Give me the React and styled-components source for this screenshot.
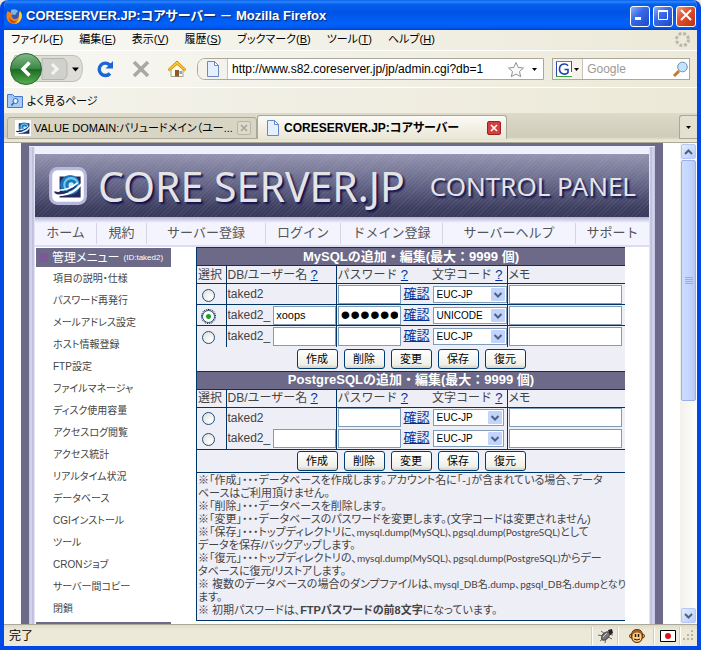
import React, { useState } from "react";
import styled, { createGlobalStyle } from "styled-components";

const GlobalStyle = createGlobalStyle`
  * {
    box-sizing: border-box;
  }
  body {
    margin: 0;
    background: #ece9d8;
    font-family: "Liberation Sans", "Noto Sans CJK JP", sans-serif;
    font-size: 12px;
    color: #000;
  }
  input, select, button {
    font-family: inherit;
    margin: 0;
    padding: 0;
  }
`;

const Window = styled.div`
  height: 100vh;
  display: flex;
  flex-direction: column;
  border: 4px solid #0048e8;
  border-top: 0;
  border-radius: 8px 8px 0 0;
  background: #ece9d8;
  overflow: hidden;
`;

const TitleBar = styled.header`
  height: 30px;
  flex: none;
  display: flex;
  align-items: center;
  gap: 3px;
  padding: 2px 1px 0 2px;
  background: linear-gradient(
    #0a5fe8 0,
    #2b86ff 6%,
    #0560ec 14%,
    #0053e4 40%,
    #0062fb 80%,
    #0058f0 92%,
    #0040c8 100%
  );
`;
const Title = styled.h1`
  flex: 1;
  margin: 0;
  font-size: 13px;
  line-height: 20px;
  font-weight: bold;
  font-feature-settings: "palt";
  white-space: nowrap;
  color: #fff;
  text-shadow: 1px 1px 1px #0a246a;
`;
const CaptionButton = styled.button`
  width: 20px;
  height: 21px;
  border: 1px solid #fff;
  border-radius: 3px;
  background: ${(props) =>
    props.$close
      ? "linear-gradient(135deg, #f0a088, #e05030 40%, #c03010)"
      : "linear-gradient(135deg, #8cb0f8, #3a6ae8 40%, #1c48c8)"};
`;

const MenuBar = styled.nav`
  height: 21px;
  flex: none;
  display: flex;
  align-items: center;
  gap: 16px;
  padding: 0 6px 2px 7px;
  background: linear-gradient(90deg, #f8f8f4, #ece9d8);
  border-bottom: 1px solid #fff;
`;
const MenuItem = styled.button`
  border: 0;
  background: none;
  font-size: 11px;
  line-height: 18px;
  font-feature-settings: "palt";
  white-space: nowrap;
`;
const Spacer = styled.div`
  flex: 1;
`;

const Toolbar = styled.div`
  height: 37px;
  flex: none;
  display: flex;
  align-items: center;
  padding: 0 7px 0 3px;
  background: linear-gradient(90deg, #f8f8f4, #ece9d8);
  border-bottom: 1px solid #fff;
`;
const ToolButton = styled.button`
  width: ${(props) => props.$width || 36}px;
  height: 34px;
  border: 0;
  background: none;
  display: flex;
  align-items: center;
  justify-content: center;
`;
const Field = styled.div`
  height: 22px;
  display: flex;
  align-items: center;
  flex: ${(props) => props.$grow};
  min-width: 0;
  margin-left: ${(props) => props.$gap}px;
  background: #fff;
  border: 1px solid #aca899;
  border-radius: ${(props) => (props.$round ? "8px 0 0 8px" : 0)};
  overflow: hidden;
`;
const FieldIcon = styled.span`
  height: 20px;
  display: flex;
  align-items: center;
  justify-content: center;
  gap: 2px;
  flex: none;
  width: 30px;
  background: #f4f2ea;
  border-right: 1px solid #c8c5b5;
`;
const FieldInput = styled.input`
  flex: 1;
  min-width: 0;
  width: 0;
  border: 0;
  outline: 0;
  padding-left: 4px;
  font-size: 12px;
  line-height: 18px;
  background: none;
  &::placeholder {
    color: #9a9a9a;
    opacity: 1;
  }
`;
const FieldButton = styled.button`
  border: 0;
  background: none;
  width: 18px;
  height: 20px;
  display: flex;
  align-items: center;
  justify-content: center;
`;

const BookmarkBar = styled.div`
  height: 25px;
  flex: none;
  display: flex;
  align-items: center;
  padding: 0 3px;
  background: linear-gradient(90deg, #f4f3ec, #ece9d8);
`;
const Bookmark = styled.a`
  display: flex;
  align-items: center;
  gap: 4px;
  color: #000;
  font-size: 11px;
  text-decoration: none;
  line-height: 18px;
  font-feature-settings: "palt";
`;

const TabStrip = styled.div`
  height: 30px;
  flex: none;
  display: flex;
  align-items: flex-end;
  padding: 0 0 3px 3px;
  background: linear-gradient(#dddac9, #cfccba 24px, #eae7d6 27px);
  border-bottom: 1px solid #aca899;
`;
const Tab = styled.div`
  flex: 0 1 250px;
  min-width: 0;
  height: ${(props) => (props.$active ? 24 : 22)}px;
  display: flex;
  align-items: center;
  gap: 3px;
  padding: 0 5px 0 7px;
  font-size: ${(props) => (props.$active ? 12 : 11)}px;
  font-weight: ${(props) => (props.$active ? "bold" : "normal")};
  background: ${(props) =>
    props.$active ? "linear-gradient(#fbfaf6, #eae7d6)" : "#d8d5c4"};
  border: 1px solid #aca899;
  border-bottom-width: ${(props) => (props.$active ? 0 : 1)}px;
  border-radius: 3px 3px 0 0;
`;
const TabLabel = styled.span`
  flex: 1;
  line-height: 18px;
  font-feature-settings: "palt";
  white-space: nowrap;
  overflow: hidden;
`;
const TabClose = styled.button`
  width: 14px;
  height: 14px;
  display: flex;
  align-items: center;
  justify-content: center;
  flex: none;
  border: 1px solid ${(props) => (props.$active ? "#a02020" : "#b8b5a5")};
  border-radius: 2px;
  background: ${(props) => (props.$active ? "#d04040" : "#dedbcd")};
`;
const TabList = styled.button`
  width: 18px;
  height: 24px;
  border: 1px solid #aca899;
  border-right: 0;
  border-radius: 3px 0 0 0;
  background: #e4e1d1;
  display: flex;
  align-items: center;
  justify-content: center;
`;

const Viewport = styled.div`
  flex: 1;
  min-height: 0;
  display: flex;
  overflow: hidden;
  background: #fff;
`;
const Site = styled.div`
  flex: 1;
  min-width: 0;
  margin: 0 17px;
  align-self: flex-start;
  padding: 3px 8px 0;
  background: #6c6a88;
`;
const SiteFrame = styled.div`
  min-height: 100vh;
  padding: 6px 6px 0;
  border-top: 1px solid #eeeefc;
  background: linear-gradient(
    90deg,
    #c0c0e0 0,
    #d8d8f0 2px,
    #b8b8d8 4px,
    #f0f0fc 6px,
    #f0f0fc calc(100% - 6px),
    #b8b8d8 calc(100% - 4px),
    #d8d8f0 calc(100% - 2px),
    #c0c0e0 100%
  );
`;
const Banner = styled.div`
  height: 64px;
  display: flex;
  align-items: center;
  gap: 10px;
  padding: 0 13px;
  overflow: hidden;
  border-top: 1px solid #f4f4ff;
  background: repeating-linear-gradient(
      135deg,
      rgba(255, 255, 255, 0.06) 0 1px,
      transparent 1px 3px
    ),
    linear-gradient(#9494b0, #68688a 45%, #3e3e60 85%, #383858);
  color: #e4e4e6;
  font-family: "Noto Sans", sans-serif;
  text-shadow: 2px 2px 2px #10104c;
  white-space: nowrap;
`;
const Brand = styled.span`
  flex: 1;
  font-size: 41px;
  line-height: 62px;
`;
const BrandSub = styled.span`
  font-size: 26px;
  line-height: 62px;
`;
const SiteNav = styled.nav`
  display: grid;
  grid-template-columns: 62fr 50fr 119fr 75fr 102fr 133fr 73fr;
  height: 30px;
  padding: 6px 0 1px;
  background: linear-gradient(#b4b4d8, #f4f4fe 6px, #f4f4fe);
  border-bottom: 2px solid #dcdcf0;
`;
const NavLink = styled.a`
  font-size: 13px;
  line-height: 20px;
  text-align: center;
  white-space: nowrap;
  color: #555;
  text-decoration: none;
  border-right: 1px solid #d4d4e4;
  &:last-child {
    border-right: 0;
  }
`;
const Body = styled.div`
  display: flex;
  background: #fff;
  padding-right: 24px;
`;
const Sidebar = styled.aside`
  flex: none;
  width: 161px;
  padding-left: 1px;
`;
const SideHead = styled.h2`
  margin: 1px 0 0;
  width: 135px;
  height: 19px;
  display: flex;
  align-items: center;
  gap: 4px;
  padding: 0 3px;
  background: #6c6a88;
  color: #fff;
  font-size: 12px;
  line-height: 18px;
  font-weight: normal;
  font-feature-settings: "palt";
  white-space: nowrap;
  &::before {
    content: "";
    flex: none;
    width: 9px;
    height: 9px;
    background: #7c5898;
  }
`;
const SideNote = styled.small`
  font-size: 8px;
`;
const SideList = styled.ul`
  list-style: none;
  margin: 0 0 2px;
  padding: 1px 0 0 17px;
`;
const SideLink = styled.a`
  display: block;
  font-size: 10px;
  line-height: 22px;
  font-feature-settings: "palt";
  white-space: nowrap;
  color: #444;
  text-decoration: none;
`;

const Main = styled.main`
  flex: 1;
  min-width: 0;
  color: #444;
  background: #eeeef6;
  border-left: 1px solid #003366;
  align-self: flex-start;
`;
const DbTable = styled.table`
  width: 100%;
  table-layout: fixed;
  border-collapse: collapse;
  border-top: 1px solid #003366;
`;
const Caption = styled.th`
  height: 18px;
  padding: 0;
  background: #6c6a88;
  border-bottom: 1px solid #003366;
  color: #fff;
  font-size: 13px;
  line-height: 16px;
`;
const HeadCell = styled.th`
  height: 18px;
  padding: 0 0 0 1px;
  text-align: left;
  font-size: 12px;
  font-weight: normal;
  line-height: 16px;
  white-space: nowrap;
  border-bottom: 1px solid #003366;
  border-right: ${(props) => (props.$line ? "1px solid #003366" : 0)};
  font-feature-settings: ${(props) => (props.$tight ? '"palt"' : "normal")};
`;
const HeadPair = styled.div`
  display: flex;
  justify-content: space-between;
  padding-right: 4px;
`;
const Cell = styled.td`
  height: 21px;
  padding: 0 1px;
  line-height: 16px;
  border-bottom: ${(props) => (props.$rule ? "1px solid #003366" : 0)};
  border-right: ${(props) => (props.$line ? "1px solid #003366" : 0)};
`;
const Inline = styled.div`
  display: flex;
  align-items: center;
  gap: 3px;
  font-size: 12px;
`;
const Link = styled.a`
  color: #003399;
  font-size: 13px;
  line-height: 16px;
  white-space: nowrap;
`;
const Radio = styled.input`
  appearance: none;
  display: block;
  width: 13px;
  height: 13px;
  margin: 2px 4px 0;
  border: 1px solid #1c5180;
  border-radius: 50%;
  background: radial-gradient(circle at 70% 70%, #fff, #dcdcd7);
  &:checked {
    background: radial-gradient(circle, #21a121 0 2px, #fff 3px);
    outline: 1px dotted #000;
  }
`;
const TextInput = styled.input`
  display: block;
  width: ${(props) => (props.$wide ? "113px" : "63px")};
  height: 19px;
  flex: none;
  padding: 0 2px;
  border: 1px solid #7f9db9;
  background: #fff;
  font-size: ${(props) => (props.type === "password" ? 28 : 11)}px;
  line-height: 16px;
`;
const SelectBox = styled.div`
  position: relative;
  width: ${(props) => props.$width}px;
  flex: none;
  svg {
    position: absolute;
    right: 2px;
    top: 2px;
    pointer-events: none;
  }
`;
const Select = styled.select`
  appearance: none;
  display: block;
  width: 100%;
  height: 17px;
  padding-left: 3px;
  border: 1px solid #7f9db9;
  border-radius: 0;
  background: #fff;
  font-size: 10px;
  color: #000;
`;
const Actions = styled.td`
  height: ${(props) => props.$height}px;
  padding: 0;
`;
const ActionRow = styled.div`
  display: flex;
  justify-content: center;
  gap: 6px;
`;
const ActionButton = styled.button`
  width: 41px;
  height: 20px;
  border: 1px solid #003c74;
  border-radius: 3px;
  background: linear-gradient(#fff, #f0f0ea 80%, #d6d0c5);
  font-size: 11px;
  line-height: 16px;
  color: #000;
`;
const Notes = styled.div`
  padding: 1px 0 3px 1px;
  border-top: 1px solid #003366;
  border-bottom: 1px solid #003366;
`;
const Note = styled.p`
  margin: 0;
  font-size: 11px;
  line-height: 13px;
  font-feature-settings: "palt";
  white-space: nowrap;
`;
const File = styled.span`
  font-family: Lato, "Noto Sans CJK JP", sans-serif;
  font-size: 10px;
  line-height: 12px;
`;

const ScrollBar = styled.div`
  width: 17px;
  flex: none;
  display: flex;
  flex-direction: column;
  padding: 1px;
  background: linear-gradient(90deg, #f3f1ec, #fefefb);
`;
const ScrollButton = styled.button`
  height: 15px;
  flex: none;
  border: 1px solid #b4c8f8;
  border-radius: 2px;
  background: linear-gradient(135deg, #e4ecfe, #b8ccfa);
  display: flex;
  align-items: center;
  justify-content: center;
`;
const Track = styled.div`
  flex: 1;
  padding: 1px 0;
`;
const Thumb = styled.div`
  height: 54%;
  display: flex;
  align-items: center;
  justify-content: center;
  border: 1px solid #98b0e8;
  border-radius: 2px;
  background: linear-gradient(90deg, #cddcfe, #c4d5fd 60%, #b6c9f7);
`;

const StatusBar = styled.footer`
  height: 22px;
  flex: none;
  display: flex;
  align-items: center;
  padding-left: 5px;
  border-top: 1px solid #aca899;
  background: linear-gradient(#dedbca, #ece9d8 5px);
  font-size: 12px;
`;
const StatusText = styled.span`
  flex: 1;
  line-height: 18px;
`;
const StatusCell = styled.span`
  width: ${(props) => props.$width}px;
  height: 18px;
  display: flex;
  align-items: center;
  justify-content: center;
  border-left: 1px solid #fff;
  box-shadow: -1px 0 0 #d0cdbb;
`;

const CaretIcon = () => (
  <svg width="5" height="3" viewBox="0 0 5 3">
    <path d="M0 0h5L2.5 3z" fill="#000" />
  </svg>
);

const PageIcon = () => (
  <svg width="16" height="16" viewBox="0 0 16 16">
    <path d="M2.500 .5h7l4 4v11h-11z" fill="#e4f0ff" stroke="#6888c0" />
    <path d="M9.500 .5v4h4z" fill="#fff" stroke="#6888c0" />
  </svg>
);

const GlobeShape = () => (
  <>
    <path d="M11 10h20v20H11z" fill="#28285c" />
    <circle cx="21" cy="18" r="9.500" fill="#1c78b8" />
    <circle cx="22" cy="18" r="6.500" fill="none" stroke="#70c8f0" strokeWidth="2" />
    <circle cx="22" cy="18" r="2.500" fill="#c0ecff" />
    <path d="M8 27q13 3 25-11" fill="none" stroke="#fff" strokeWidth="2" />
    <path d="M6 24c-1 5 14 5 26-10-9 9-19 12-26 10z" fill="#28285c" />
    <path d="M10 23q10 0 18-7" fill="none" stroke="#fff" strokeWidth="1.500" />
  </>
);

const GlobeLogo = () => (
  <svg width="40" height="40" viewBox="0 0 38 38">
    <rect x="1" y="1" width="36" height="36" rx="8" fill="#b8b8dc" />
    <rect x="4" y="4" width="30" height="30" rx="5" fill="#fff" />
    <GlobeShape />
  </svg>
);

const GlobeFavicon = () => (
  <svg width="16" height="16" viewBox="4 4 30 30">
    <path d="M4 4h30v30H4z" fill="#fff" />
    <GlobeShape />
  </svg>
);

const FirefoxIcon = () => (
  <svg width="17" height="17" viewBox="0 0 17 17">
    <circle cx="8.500" cy="8" r="7" fill="#3058b8" />
    <path d="M5 2q4-2 7 1l-3 4-4-1z" fill="#78b8f0" />
    <path
      d="M1.500 3L4 4.500Q6 4 7 6L5.500 7.500Q6 11 9 11q4 0 4-5l1-3q3 3 1.500 8Q13 16 8 16 1 15 .5 9 .5 5 1.500 3z"
      fill="#f08018"
    />
    <path d="M14 3q3 4 1 8-2 4-6 5 5-4 4-10z" fill="#fcd040" />
    <path d="M3 9q2 5 8 4-3 3-6 1-2-2-2-5z" fill="#c84008" />
  </svg>
);

const BackForward = () => (
  <svg width="80" height="34" viewBox="0 0 80 34">
    <defs>
      <linearGradient id="green" x1="0" y1="0" x2="0" y2="1">
        <stop offset="0" stopColor="#84b888" />
        <stop offset=".48" stopColor="#3f8848" />
        <stop offset=".52" stopColor="#1b6c24" />
        <stop offset="1" stopColor="#58b050" />
      </linearGradient>
    </defs>
    <path
      d="M8 3.500h58q9 0 9.500 13Q75 29.500 66 29.500H8q-8-12 0-26z"
      fill="#deddd6"
      stroke="#c0bfb6"
    />
    <path d="M35 6.500h22l3 4v13l-3 4H35z" fill="#d0d0cc" stroke="#b4b4b0" />
    <path
      d="M45 12l5 5-5 5"
      fill="none"
      stroke="#f4f4f4"
      strokeWidth="3"
    />
    <circle cx="19" cy="17" r="15.500" fill="url(#green)" stroke="#286830" />
    <path
      d="M22.500 10.500L16 17l6.500 6.500"
      fill="none"
      stroke="#fff"
      strokeWidth="3.500"
    />
    <path d="M65 15.500h7l-3.500 4z" fill="#000" />
  </svg>
);

const ReloadIcon = () => (
  <svg width="18" height="18" viewBox="0 0 18 18">
    <path
      d="M14 5.200A6.200 6.200 0 1 0 14 13.500"
      fill="none"
      stroke="#1c64d8"
      strokeWidth="3.400"
    />
    <path d="M17 1v7.500H9.500z" fill="#1c64d8" />
  </svg>
);

const StopIcon = () => (
  <svg width="18" height="18" viewBox="0 0 18 18">
    <path d="M2 2l14 14M16 2L2 16" stroke="#a8a8a4" strokeWidth="3.600" />
  </svg>
);

const HomeIcon = () => (
  <svg width="20" height="18" viewBox="0 0 20 18">
    <path d="M4 9l6-6 6 6v7.500H4z" fill="#fffbe8" stroke="#a8a090" />
    <path
      d="M1 9.500L10 1l9 8.500-1.500 1.300L10 4.500l-7.500 6.300z"
      fill="#fcc830"
      stroke="#c88c10"
    />
    <path d="M8 10h4v6.500H8z" fill="#8c5830" />
    <path d="M12.500 11h2.500v3h-2.500z" fill="#70a8e8" />
  </svg>
);

const StarIcon = () => (
  <svg width="18" height="17" viewBox="0 0 18 17">
    <path
      d="M9 1.500l2.300 5 5.200.5-4 3.500 1.200 5.200L9 13l-4.700 2.700 1.200-5.200-4-3.500 5.200-.5z"
      fill="#fafafa"
      stroke="#909090"
    />
  </svg>
);

const SearchEngineIcon = () => (
  <svg width="16" height="16" viewBox="0 0 16 16">
    <path d="M0 0h16v16H0z" fill="#fff" />
    <path d="M.5 16V0" stroke="#2848b8" />
    <path d="M0 .5h15" stroke="#38a838" />
    <path d="M15.500 0v11" stroke="#d82020" />
    <path d="M0 15.500h16" stroke="#38a838" />
    <path
      d="M12 4.800C9.500 1.500 3.500 3 3.500 8s6 6.500 8.500 3.500V8.500H8.500"
      fill="none"
      stroke="#2040b0"
      strokeWidth="1.600"
    />
  </svg>
);

const MagnifierIcon = () => (
  <svg width="17" height="17" viewBox="0 0 17 17">
    <path d="M2 15l5-5" stroke="#c87828" strokeWidth="3" />
    <circle cx="10.500" cy="6" r="4.800" fill="#c4e4fc" stroke="#6c90b8" />
  </svg>
);

const ThrobberIcon = () => (
  <svg width="17" height="17" viewBox="0 0 17 17">
    <circle
      cx="8.500"
      cy="8.500"
      r="6"
      fill="none"
      stroke="#b8b6b0"
      strokeWidth="3"
      strokeDasharray="2.900 1.812"
    />
  </svg>
);

const FolderIcon = () => (
  <svg width="16" height="15" viewBox="0 0 16 15">
    <path d="M.5 1.500h5l2 2h8v11H.5z" fill="#9cc4f4" stroke="#4478c8" />
    <path d="M1 5h14v9H1z" fill="#a8ccf8" />
    <circle cx="8.500" cy="8" r="2.500" fill="#e4f4ff" stroke="#3060b0" />
    <path d="M6.500 10l-2 2.500" stroke="#3060b0" strokeWidth="1.500" />
  </svg>
);

const CrossIcon = ({ color }) => (
  <svg width="8" height="8" viewBox="0 0 8 8">
    <path d="M1 1l6 6M7 1L1 7" stroke={color} strokeWidth="1.600" />
  </svg>
);

const ChevronIcon = ({ up }) => (
  <svg width="9" height="6" viewBox="0 0 9 6">
    <path
      d={up ? "M1 5l3.500-3.500L8 5" : "M1 1l3.500 3.500L8 1"}
      fill="none"
      stroke="#4d6185"
      strokeWidth="2"
    />
  </svg>
);

const SelectArrow = () => (
  <svg width="14" height="13" viewBox="0 0 14 13">
    <rect width="14" height="13" rx="1" fill="#c2d3fc" />
    <path d="M3.500 5L7 8.500 10.500 5" fill="none" stroke="#4d6185" strokeWidth="2" />
  </svg>
);

const BugIcon = () => (
  <svg width="18" height="17" viewBox="0 0 18 17">
    <path
      d="M1 8l5 1M3 14l4-3M8 16l1-5M15 12l-4-2M16 8l-5-1M4 4l4 3"
      stroke="#666"
    />
    <ellipse
      cx="8.500"
      cy="9"
      rx="5"
      ry="3"
      transform="rotate(-45 8.500 9)"
      fill="#777"
      stroke="#444"
    />
    <path d="M11 3l4-1 1 4-3 2z" fill="#222" />
    <path d="M6 10l4-4" stroke="#ccc" />
  </svg>
);

const MonkeyIcon = () => (
  <svg width="16" height="16" viewBox="0 0 16 16">
    <circle cx="2.500" cy="8" r="2" fill="#e8a860" stroke="#704010" />
    <circle cx="13.500" cy="8" r="2" fill="#e8a860" stroke="#704010" />
    <path
      d="M8 1.500q6 0 5.500 7Q13 14.500 8 14.500T2.500 8.500Q2 1.500 8 1.500z"
      fill="#a86020"
      stroke="#603008"
    />
    <path d="M4 6q4-3 8 0 2 7-4 8-6-1-4-8z" fill="#fcd088" />
    <path d="M6.500 6v3M9.500 6v3" stroke="#281808" strokeWidth="1.500" />
    <path d="M5 11q3 2 6 0" fill="none" stroke="#281808" />
  </svg>
);

const FlagIcon = () => (
  <svg width="16" height="12" viewBox="0 0 16 12">
    <path d="M.5 .5h15v11H.5z" fill="#fff" stroke="#000" />
    <circle cx="8" cy="6" r="3" fill="#e01018" />
  </svg>
);

const menus = [
  ["ファイル", "F"],
  ["編集", "E"],
  ["表示", "V"],
  ["履歴", "S"],
  ["ブックマーク", "B"],
  ["ツール", "T"],
  ["ヘルプ", "H"],
];

const siteLinks = [
  "ホーム",
  "規約",
  "サーバー登録",
  "ログイン",
  "ドメイン登録",
  "サーバーヘルプ",
  "サポート",
];

const sideLinks = [
  "項目の説明・仕様",
  "パスワード再発行",
  "メールアドレス設定",
  "ホスト情報登録",
  "FTP設定",
  "ファイルマネージャ",
  "ディスク使用容量",
  "アクセスログ閲覧",
  "アクセス統計",
  "リアルタイム状況",
  "データベース",
  "CGIインストール",
  "ツール",
  "CRONジョブ",
  "サーバー間コピー",
  "閉鎖",
];

const mysqlRows = [
  { id: "my0", fixed: true, code: "EUC-JP" },
  { id: "my1", name: "xoops", password: "password", code: "UNICODE" },
  { id: "my2", code: "EUC-JP" },
];
const pgsqlRows = [
  { id: "pg0", fixed: true, code: "EUC-JP" },
  { id: "pg1", code: "EUC-JP" },
];

const DbSection = ({ title, rows, selected, onSelect, ruled }) => (
  <DbTable>
    <colgroup>
      <col style={{ width: 29 }} />
      <col style={{ width: 110 }} />
      <col style={{ width: 171 }} />
      <col />
    </colgroup>
    <thead>
      <tr>
        <Caption colSpan={4}>{title}</Caption>
      </tr>
      <tr>
        <HeadCell $line>選択</HeadCell>
        <HeadCell $line>
          DB/ユーザー名 <Link href="#name">?</Link>
        </HeadCell>
        <HeadCell $line>
          <HeadPair>
            <span>
              パスワード <Link href="#password">?</Link>
            </span>
            <span>
              文字コード <Link href="#code">?</Link>
            </span>
          </HeadPair>
        </HeadCell>
        <HeadCell $tight>メモ</HeadCell>
      </tr>
    </thead>
    <tbody>
      {rows.map((row, i) => {
        const rule = ruled ? i < rows.length - 1 : i === rows.length - 1;
        return (
          <tr key={row.id}>
            <Cell $line $rule={rule}>
              <Radio
                type="radio"
                name="db"
                aria-label={row.id}
                checked={selected === row.id}
                onChange={() => onSelect(row.id)}
              />
            </Cell>
            <Cell $line $rule={rule}>
              <Inline>
                {row.fixed ? "taked2" : "taked2_"}
                {!row.fixed && (
                  <TextInput aria-label="ユーザー名" defaultValue={row.name} />
                )}
              </Inline>
            </Cell>
            <Cell $line $rule={rule}>
              <Inline>
                <TextInput
                  type="password"
                  aria-label="パスワード"
                  defaultValue={row.password}
                />
                <Link href="#check">確認</Link>
                <SelectBox $width={ruled ? 74 : 71}>
                  <Select aria-label="文字コード" defaultValue={row.code}>
                    <option>EUC-JP</option>
                    <option>UNICODE</option>
                  </Select>
                  <SelectArrow />
                </SelectBox>
              </Inline>
            </Cell>
            <Cell $rule={rule}>
              <TextInput $wide aria-label="メモ" />
            </Cell>
          </tr>
        );
      })}
      <tr>
        <Actions colSpan={4} $height={ruled ? 24 : 23}>
          <ActionRow>
            {["作成", "削除", "変更", "保存", "復元"].map((label) => (
              <ActionButton key={label}>{label}</ActionButton>
            ))}
          </ActionRow>
        </Actions>
      </tr>
    </tbody>
  </DbTable>
);

const App = () => {
  const [selected, setSelected] = useState("my1");

  return (
    <>
      <GlobalStyle />
      <Window>
        <TitleBar>
          <FirefoxIcon />
          <Title>CORESERVER.JP:コアサーバー － Mozilla Firefox</Title>
          <CaptionButton aria-label="最小化">
            <svg width="12" height="12" viewBox="0 0 12 12">
              <path d="M1 8h6v3H1z" fill="#fff" />
            </svg>
          </CaptionButton>
          <CaptionButton aria-label="最大化">
            <svg width="12" height="12" viewBox="0 0 12 12">
              <path d="M1.500 2v8.500h9V2" fill="none" stroke="#fff" />
              <path d="M1 1h10v2H1z" fill="#fff" />
            </svg>
          </CaptionButton>
          <CaptionButton $close aria-label="閉じる">
            <svg width="12" height="12" viewBox="0 0 12 12">
              <path d="M1 1l10 10M11 1L1 11" stroke="#fff" strokeWidth="2" />
            </svg>
          </CaptionButton>
        </TitleBar>
        <MenuBar>
          {menus.map(([label, key]) => (
            <MenuItem key={key}>
              {label}(<u>{key}</u>)
            </MenuItem>
          ))}
          <Spacer />
          <ThrobberIcon />
        </MenuBar>
        <Toolbar>
          <ToolButton $width={80} aria-label="戻る">
            <BackForward />
          </ToolButton>
          <ToolButton aria-label="更新">
            <ReloadIcon />
          </ToolButton>
          <ToolButton aria-label="中止">
            <StopIcon />
          </ToolButton>
          <ToolButton aria-label="ホーム">
            <HomeIcon />
          </ToolButton>
          <Field $round $grow={348} $gap={2}>
            <FieldIcon>
              <PageIcon />
            </FieldIcon>
            <FieldInput
              aria-label="URL"
              defaultValue="http://www.s82.coreserver.jp/jp/admin.cgi?db=1"
            />
            <FieldButton aria-label="ブックマーク">
              <StarIcon />
            </FieldButton>
            <FieldButton aria-label="履歴">
              <CaretIcon />
            </FieldButton>
          </Field>
          <Field $grow={137} $gap={8}>
            <FieldIcon>
              <SearchEngineIcon />
              <CaretIcon />
            </FieldIcon>
            <FieldInput aria-label="検索" placeholder="Google" />
            <FieldButton aria-label="検索する">
              <MagnifierIcon />
            </FieldButton>
          </Field>
        </Toolbar>
        <BookmarkBar>
          <Bookmark href="#bookmarks">
            <FolderIcon />
            よく見るページ
          </Bookmark>
        </BookmarkBar>
        <TabStrip>
          <Tab>
            <GlobeFavicon />
            <TabLabel>VALUE DOMAIN:バリュードメイン（ユー...</TabLabel>
            <TabClose aria-label="タブを閉じる">
              <CrossIcon color="#a8a598" />
            </TabClose>
          </Tab>
          <Tab $active>
            <PageIcon />
            <TabLabel>CORESERVER.JP:コアサーバー</TabLabel>
            <TabClose $active aria-label="タブを閉じる">
              <CrossIcon color="#fff" />
            </TabClose>
          </Tab>
          <Spacer />
          <TabList aria-label="タブの一覧">
            <CaretIcon />
          </TabList>
        </TabStrip>
        <Viewport>
          <Site>
            <SiteFrame>
              <Banner>
                <GlobeLogo />
                <Brand>CORE SERVER.JP</Brand>
                <BrandSub>CONTROL PANEL</BrandSub>
              </Banner>
              <SiteNav>
                {siteLinks.map((label) => (
                  <NavLink key={label} href="#nav">
                    {label}
                  </NavLink>
                ))}
              </SiteNav>
              <Body>
                <Sidebar>
                  <SideHead>
                    管理メニュー <SideNote>(ID:taked2)</SideNote>
                  </SideHead>
                  <SideList>
                    {sideLinks.map((label) => (
                      <li key={label}>
                        <SideLink href="#menu">{label}</SideLink>
                      </li>
                    ))}
                  </SideList>
                  <SideHead />
                </Sidebar>
                <Main>
                  <DbSection
                    title="MySQLの追加・編集(最大：9999 個)"
                    rows={mysqlRows}
                    selected={selected}
                    onSelect={setSelected}
                    ruled
                  />
                  <DbSection
                    title="PostgreSQLの追加・編集(最大：9999 個)"
                    rows={pgsqlRows}
                    selected={selected}
                    onSelect={setSelected}
                  />
                  <Notes>
                    <Note>
                      ※「作成」・・・データベースを作成します。アカウント名に「-」が含まれている場合、データ
                      <br />
                      ベースはご利用頂けません。
                    </Note>
                    <Note>※「削除」・・・データベースを削除します。</Note>
                    <Note>
                      ※「変更」・・・データベースのパスワードを変更します。(文字コードは変更されません)
                    </Note>
                    <Note>
                      ※「保存」・・・トップディレクトリに、
                      <File>mysql.dump(MySQL)、pgsql.dump(PostgreSQL)</File>として
                      <br />
                      データを保存/バックアップします。
                    </Note>
                    <Note>
                      ※「復元」・・・トップディレクトリの、
                      <File>mysql.dump(MySQL)、pgsql.dump(PostgreSQL)</File>からデー
                      <br />
                      タベースに復元/リストアします。
                    </Note>
                    <Note>
                      ※ 複数のデータベースの場合のダンプファイルは
                      <File>、mysql_DB名.dump、pgsql_DB名.dumpとなり</File>
                      <br />
                      ます。
                    </Note>
                    <Note>
                      ※ 初期パスワードは、<b>FTPパスワードの前8文字</b>
                      になっています。
                    </Note>
                  </Notes>
                </Main>
              </Body>
            </SiteFrame>
          </Site>
          <ScrollBar>
            <ScrollButton aria-label="上へ">
              <ChevronIcon up />
            </ScrollButton>
            <Track>
              <Thumb>
                <svg width="8" height="8" viewBox="0 0 8 8">
                  <path d="M0 .5h8M0 2.500h8M0 4.500h8M0 6.500h8" stroke="#8cb0f8" />
                </svg>
              </Thumb>
            </Track>
            <ScrollButton aria-label="下へ">
              <ChevronIcon />
            </ScrollButton>
          </ScrollBar>
        </Viewport>
        <StatusBar>
          <StatusText>完了</StatusText>
          <StatusCell $width={26}>
            <BugIcon />
          </StatusCell>
          <StatusCell $width={36}>
            <MonkeyIcon />
          </StatusCell>
          <StatusCell $width={26}>
            <FlagIcon />
          </StatusCell>
          <StatusCell $width={17}>
            <svg width="12" height="12" viewBox="0 0 12 12">
              <path
                d="M8 0h2v2H8zM4 4h2v2H4zM8 4h2v2H8zM0 8h2v2H0zM4 8h2v2H4zM8 8h2v2H8z"
                fill="#b8b4a2"
              />
            </svg>
          </StatusCell>
        </StatusBar>
      </Window>
    </>
  );
};

export default App;
